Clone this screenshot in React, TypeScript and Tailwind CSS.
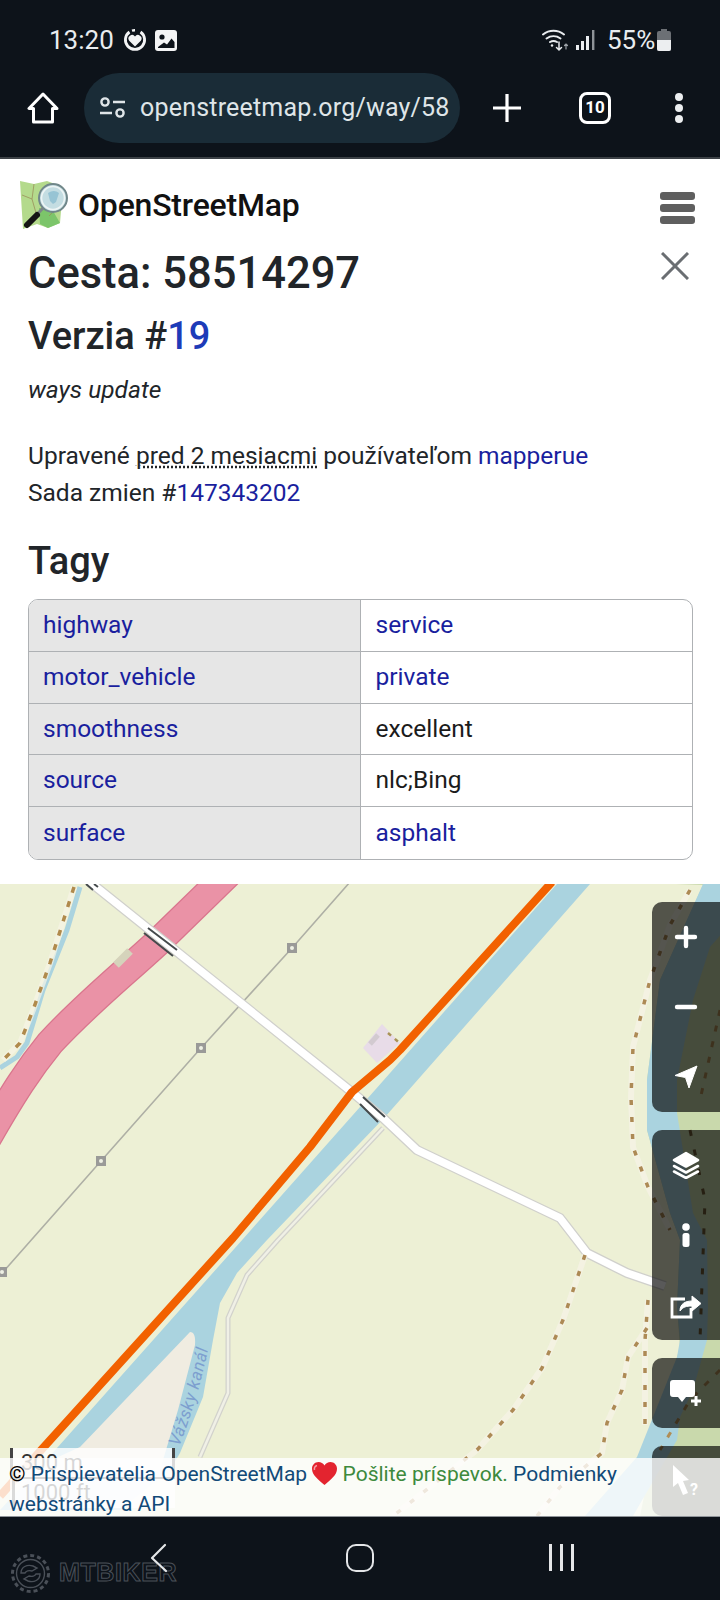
import React from 'react';

const tags = [
  { key: 'highway', value: 'service', linked: true },
  { key: 'motor_vehicle', value: 'private', linked: true },
  { key: 'smoothness', value: 'excellent', linked: false },
  { key: 'source', value: 'nlc;Bing', linked: false },
  { key: 'surface', value: 'asphalt', linked: true },
];

const StatusBar = () => (
  <div className="flex items-center h-[70px] pl-[49px] pt-[10px] text-[#e9ecef] text-[26px]">
    <span className="w-[74px]">13:20</span>
    <svg width="24" height="22" viewBox="0 0 24 22" fill="none">
      <path d="M6.500 3A9.600 9.600 0 1 0 17.500 3" stroke="#f3f4f5" strokeWidth="2.800" />
      <path d="M9 1.600A10 10 0 0 1 12 1.200" stroke="#f3f4f5" strokeWidth="2.400" />
      <path d="M12 17.500l-5.800-5.800a3.500 3.500 0 0 1 5.800-4.200 3.500 3.500 0 0 1 5.800 4.200z" fill="#f3f4f5" />
    </svg>
    <svg className="ml-[8px]" width="22" height="21" viewBox="0 0 22 21">
      <rect x="0" y="0" width="22" height="21" rx="3" fill="#f3f4f5" />
      <circle cx="7" cy="7" r="2.600" fill="#0d131a" />
      <path d="M3 17l6-4.500 3 2 4.500-6 3 3.500V18H3z" fill="#0d131a" />
    </svg>
    <div className="flex-1" />
    <svg width="27" height="24" viewBox="0 0 27 24" fill="none" stroke="#e9ecef" strokeLinecap="round">
      <path d="M1 6.500a17 17 0 0 1 21 0" strokeWidth="2" />
      <path d="M4.500 10.500a12 12 0 0 1 14 0" strokeWidth="2" />
      <path d="M8 14a7 7 0 0 1 7 0" strokeWidth="2" />
      <circle cx="10" cy="17.500" r="1.200" fill="#e9ecef" stroke="none" />
      <path d="M17 14v8m-2.500-2.500L17 22l2.500-2.500" strokeWidth="1.500" />
      <path d="M24 21v-5m-1.500 1.500L24 16l1.500 1.500" strokeWidth="1.200" stroke="#9aa0a6" />
    </svg>
    <svg className="ml-[7px]" width="19" height="20" viewBox="0 0 19 20" fill="#e9ecef">
      <rect x="0" y="15" width="3" height="5" />
      <rect x="5" y="11" width="3" height="9" />
      <rect x="10" y="6" width="3" height="14" />
      <rect x="16" y="0" width="2.400" height="20" fill="#8e9398" />
    </svg>
    <span className="ml-[12px] w-[50px]">55%</span>
    <svg width="14" height="22" viewBox="0 0 14 22">
      <rect x="4" y="0" width="6" height="3" fill="#6c7075" />
      <rect x="0" y="2" width="14" height="20" rx="2" fill="#6c7075" />
      <path d="M0 11h14v9a2 2 0 0 1-2 2H2a2 2 0 0 1-2-2z" fill="#eceef0" />
    </svg>
    <div className="w-[49px]" />
  </div>
);

const Toolbar = () => (
  <div className="flex items-center h-[75px] pl-[27px]">
    <svg width="32" height="32" viewBox="0 0 32 32" fill="none" stroke="#fff" strokeWidth="3" strokeLinejoin="round">
      <path d="M16 2L2 16.500h4.500V30h19V16.500H30z" />
    </svg>
    <div className="ml-[25px] w-[376px] h-[70px] rounded-full bg-[#1a2c37] flex items-center pl-[15px]">
      <svg width="27" height="21" viewBox="0 0 27 21" fill="none" stroke="#dfe5e8" strokeWidth="2.400">
        <circle cx="6" cy="5" r="3.600" />
        <path d="M14 5h12M1 16h12" />
        <circle cx="21" cy="16" r="3.600" />
      </svg>
      <span className="ml-[14px] text-[25px] text-[#dfe5e8] whitespace-nowrap tracking-[0.2px]">openstreetmap.org/way/58</span>
    </div>
    <svg className="ml-[32px]" width="30" height="30" viewBox="0 0 30 30" stroke="#fff" strokeWidth="3.200">
      <path d="M15 1v28M1 15h28" />
    </svg>
    <div className="ml-[57px] w-[32px] h-[32px] rounded-[8px] border-[3px] border-white flex items-center justify-center text-white text-[17px] font-bold leading-none">10</div>
    <div className="ml-[64px] flex flex-col gap-[3px]">
      <div className="w-[8px] h-[8px] rounded-full bg-[#eceef0]" />
      <div className="w-[8px] h-[8px] rounded-full bg-[#eceef0]" />
      <div className="w-[8px] h-[8px] rounded-full bg-[#eceef0]" />
    </div>
  </div>
);

const OsmLogo = () => (
  <svg width="50" height="52" viewBox="0 0 50 52">
    <path d="M1 3l14 3 13-3 16 6-3 36-12 5-11-4-14 5z" fill="#b4da8c" />
    <path d="M20 30l14 3 7 12-12 5-8-4z" fill="#7cc56a" />
    <path d="M3 17l10 4 4 14M15 6l-2 15M30 38l10-10" stroke="#9a8f5a" strokeWidth="0.800" fill="none" />
    <circle cx="34" cy="20" r="14" fill="#c4dde2" stroke="#71878a" strokeWidth="2" />
    <circle cx="34" cy="20" r="11.500" fill="none" stroke="#eef5f5" strokeWidth="1.600" />
    <path d="M29 15q6-4 11 0l-3 9-3 2-3-3z" fill="#97c4d4" />
    <path d="M24 30L11 44" stroke="#7c8587" strokeWidth="3" />
    <path d="M18 37L8 47" stroke="#151515" strokeWidth="6" strokeLinecap="round" />
  </svg>
);

const Detail = () => (
  <section className="bg-white h-[725px] font-['Roboto',sans-serif] text-[#212529]">
    <div className="h-[87px] flex justify-between pl-[19px] pr-[25px] pt-[19px]">
      <div className="flex items-start">
        <OsmLogo />
        <span className="ml-[9px] mt-[5px] text-[32px] leading-[44px] font-medium text-[#111] tracking-[-0.2px]">OpenStreetMap</span>
      </div>
      <div className="pt-[14px] flex flex-col gap-[4px]">
        <div className="w-[35px] h-[8px] rounded-[3px] bg-[#5f5f5f]" />
        <div className="w-[35px] h-[8px] rounded-[3px] bg-[#5f5f5f]" />
        <div className="w-[35px] h-[8px] rounded-[3px] bg-[#5f5f5f]" />
      </div>
    </div>
    <div className="px-[28px]">
      <div className="flex justify-between items-start pr-[3px]">
        <h1 className="text-[43.500px] leading-[55px] font-medium">Cesta: 58514297</h1>
        <svg className="mt-[6px]" width="28" height="28" viewBox="0 0 28 28" stroke="#6a6e72" strokeWidth="3">
          <path d="M1 1l26 26M27 1L1 27" />
        </svg>
      </div>
      <h2 className="mt-[13px] text-[38px] leading-[44px] font-medium">
        Verzia #<span className="text-[#1d3bb8]">19</span>
      </h2>
      <p className="mt-[14px] text-[24.500px] leading-[36px] italic">ways update</p>
      <p className="mt-[29px] text-[24.500px] leading-[37px]">
        Upravené <span className="underline decoration-dotted underline-offset-2">pred 2 mesiacmi</span> používateľom <a className="text-[#1a1f9e]">mapperue</a>
        <br />
        Sada zmien #<a className="text-[#1a1f9e]">147343202</a>
      </p>
      <h2 className="mt-[25px] text-[38px] leading-[50px] font-medium">Tagy</h2>
      <div className="mt-[13px] mr-[-1px] h-[261px] border border-[#aeb1b4] rounded-[10px] overflow-hidden grid grid-rows-5 text-[24.500px]">
        {tags.map((tag, idx) => (
          <div key={tag.key} className={`grid grid-cols-2 ${idx < tags.length - 1 ? 'border-b border-[#aeb1b4]' : ''}`}>
            <div className="bg-[#e6e6e6] border-r border-[#aeb1b4] pl-[14px] flex items-center text-[#1a1f9e]">{tag.key}</div>
            <div className={`pl-[15px] flex items-center ${tag.linked ? 'text-[#1a1f9e]' : 'text-[#1b1b1b]'}`}>{tag.value}</div>
          </div>
        ))}
      </div>
    </div>
  </section>
);

const roadPath = 'M90 882L353 1093 383 1118 417 1150 560 1218 577 1240 587 1253 627 1273 665 1286';
const pinkPath = 'M232 870L157 943C120 977 85 1005 50 1043 32 1065 14 1090-25 1160';
const trails = [
  'M690 890L670 925 650 980 633 1047 631 1097 633 1147 648 1187 670 1230',
  'M585 1255L563 1320 542 1368 513 1410 477 1450 393 1516',
  'M647 1328L628 1357 622 1390 607 1423 602 1453 560 1487 537 1516',
  'M648 1300L645 1340 645 1425',
];

// whole map drawing, coordinates are page coordinates
const MapDrawing = () => (
  <svg className="absolute inset-0" width="720" height="632" viewBox="0 884 720 632" fill="none" strokeLinejoin="round">
    <rect x="0" y="884" width="720" height="632" fill="#edf0d5" />

    {/* river and forest on the right */}
    <path d="M676 884H720V1516H640L660 1417 680 1347 677 1307 680 1240 670 1213 647 1130 647 1080 660 980 703 885z" fill="#c9d9ac" />
    <path d="M703 884H725V930L710 947 693 1000 677 1080 677 1113 693 1213 707 1240 708 1307 707 1340 693 1390 680 1417 677 1440 633 1516H585L637 1457 653 1417 677 1357 680 1340 677 1307 680 1240 670 1213 647 1130 647 1080 660 980z" fill="#aad3df" />

    {/* canal */}
    <path d="M557 884H590L385 1117 360 1143 267 1240 237 1273 220 1303 213 1340 203 1397 180 1453 170 1470 120 1510H0L57 1448 243 1239 360 1107z" fill="#aad3df" />
    <path d="M190 1332Q196 1332 195 1345L178 1410 160 1470H30L80 1447z" fill="#f0ece1" />

    {/* track beside the canal */}
    <path d="M383 1128L278 1240 247 1275 228 1318 228 1393 200 1457" stroke="#d2d2cc" strokeWidth="5" />
    <path d="M383 1128L278 1240 247 1275 228 1318 228 1393 200 1457" stroke="#f0f0e6" strokeWidth="2.500" />

    {/* stream + path top left */}
    <path d="M80 887L67 930 43 990 27 1043 17 1057 0 1068" stroke="#aad3df" strokeWidth="5" />
    <path d="M74 887L50 963 33 1010 20 1043 3 1060" stroke="#f6f4e6" strokeWidth="6" strokeOpacity="0.7" />
    <path d="M74 887L50 963 33 1010 20 1043 3 1060" stroke="#b08a4c" strokeWidth="3.500" strokeDasharray="6 9" />

    {/* trunk road */}
    <path d={pinkPath} stroke="#d9758d" strokeWidth="29" />
    <path d={pinkPath} stroke="#ea92a6" strokeWidth="26.500" />
    <path d="M116 965L130 951" stroke="#d5d3bb" strokeWidth="8" />

    {/* power line */}
    <path d="M350 882L292 948 201 1048 101 1161 3 1272" stroke="#aeafa5" strokeWidth="1.600" />
    <g fill="#9a9a98">
      <rect x="287" y="943" width="10" height="10" />
      <rect x="196" y="1043" width="10" height="10" />
      <rect x="96" y="1156" width="10" height="10" />
      <rect x="-3" y="1267" width="10" height="10" />
    </g>
    <g fill="#eef0e4">
      <circle cx="292" cy="948" r="2" />
      <circle cx="201" cy="1048" r="2" />
      <circle cx="101" cy="1161" r="2" />
      <circle cx="2" cy="1272" r="2" />
    </g>

    {/* small plot */}
    <path d="M382 1024L400 1043 377 1063 363 1048z" fill="#e8dce8" />
    <path d="M370 1044L378 1035" stroke="#d2cad0" strokeWidth="5" />
    <path d="M388 1033L402 1045" stroke="#a99355" strokeWidth="2.500" strokeDasharray="4 5" />

    {/* white service road */}
    <path d={roadPath} stroke="#d0d0cc" strokeWidth="10" />
    <path d={roadPath} stroke="#fff" strokeWidth="7.500" />
    <g stroke="#454a4c" strokeWidth="2">
      <path d="M148 928L177 950M144 933L173 956" />
      <path d="M363 1097L385 1117M360 1104L378 1122" />
      <path d="M86 884L93 890M94 884L98 887" />
    </g>

    {/* the way itself */}
    <path d="M552 882L400 1050 390 1060 352 1092 310 1147 233 1238 43 1448 0 1496" stroke="#f26100" strokeWidth="8" />

    {/* footpaths */}
    <g>
      {trails.map((d) => (
        <path key={d} d={d} stroke="#f5f3e5" strokeWidth="6" strokeOpacity="0.8" />
      ))}
      {trails.map((d) => (
        <path key={d} d={d} stroke="#ad8a55" strokeWidth="3.500" strokeDasharray="5 12" />
      ))}
      <path d="M690 1130L705 1200 700 1340" stroke="#6d5a34" strokeWidth="3" strokeDasharray="6 14" />
      <path d="M720 1010L700 1100" stroke="#b08d55" strokeWidth="3" strokeDasharray="6 10" />
      <path d="M720 1370L690 1400 660 1450" stroke="#b08d55" strokeWidth="3" strokeDasharray="6 10" />
    </g>

    <path id="kanal" d="M179 1447Q196 1405 208 1350" />
    <text fontFamily="Roboto, sans-serif" fontStyle="italic" fontSize="17" fill="#7d9fcf" letterSpacing="0.6">
      <textPath href="#kanal">Vážsky kanál</textPath>
    </text>
  </svg>
);

const Btn = ({ children }: { children: React.ReactNode }) => (
  <div className="h-[70px] flex items-center justify-center">{children}</div>
);

const MapControls = () => (
  <div className="absolute right-0 top-[18px] w-[68px] flex flex-col gap-[18px]">
    <div className="bg-black/65 rounded-l-[10px]">
      <Btn>
        <svg width="24" height="24" viewBox="0 0 24 24" stroke="#fff" strokeWidth="4.400" strokeLinecap="round">
          <path d="M12 3v18M3 12h18" />
        </svg>
      </Btn>
      <Btn>
        <svg width="24" height="24" viewBox="0 0 24 24" stroke="#fff" strokeWidth="4.400" strokeLinecap="round">
          <path d="M3 12h18" />
        </svg>
      </Btn>
      <Btn>
        <svg width="24" height="24" viewBox="0 0 24 24" fill="#fff">
          <path d="M23 1L1 10.500l10.500 2 3.500 10.500z" stroke="#fff" strokeWidth="1" strokeLinejoin="round" />
        </svg>
      </Btn>
    </div>
    <div className="bg-black/65 rounded-l-[10px]">
      <Btn>
        <svg width="28" height="28" viewBox="0 0 28 28" fill="none" stroke="#fff" strokeWidth="2.600" strokeLinecap="round" strokeLinejoin="round">
          <path d="M14 2L26 9 14 15.500 2 9z" fill="#fff" />
          <path d="M2 15l12 6.500L26 15M2 20.500L14 27l12-6.500" />
        </svg>
      </Btn>
      <Btn>
        <svg width="10" height="24" viewBox="0 0 10 24" fill="#fff">
          <circle cx="5" cy="4" r="3.800" />
          <rect x="1.500" y="10" width="7" height="14" rx="2.500" />
        </svg>
      </Btn>
      <Btn>
        <svg width="32" height="27" viewBox="0 0 32 27" fill="none" stroke="#fff" strokeWidth="2.800">
          <path d="M15 7H2v18h19v-9" />
          <path d="M10 19c0-7 5-10 12-10V4l9 7.500L22 19v-5c-6 0-9 1-12 5z" fill="#fff" strokeWidth="1" strokeLinejoin="round" />
        </svg>
      </Btn>
    </div>
    <div className="bg-black/65 rounded-l-[10px]">
      <Btn>
        <svg width="32" height="28" viewBox="0 0 32 28" fill="#fff">
          <path d="M3 1h19a3 3 0 0 1 3 3v11a3 3 0 0 1-3 3h-6l-4 5-4-5H3a3 3 0 0 1-3-3V4a3 3 0 0 1 3-3z" />
          <path d="M26 17v10M21 22h10" stroke="#fff" strokeWidth="3" />
        </svg>
      </Btn>
    </div>
    <div className="bg-black/65 rounded-l-[10px]">
      <Btn>
        <svg width="30" height="32" viewBox="0 0 30 32" fill="#fff">
          <path d="M2 0l16 15-6 1 5 12-5 2-5-12-5 4z" />
          <text x="19" y="30" fontSize="16" fontWeight="700" fontFamily="Roboto, sans-serif">?</text>
        </svg>
      </Btn>
    </div>
  </div>
);

const ScaleControl = () => (
  <div className="absolute left-[10px] top-[564px] w-[165px] h-[60px] bg-white/80 text-[22px] leading-[30px] font-['Roboto',sans-serif] text-[#333] pl-[11px]">
    <div className="absolute left-0 top-0 w-[3px] h-[30px] bg-[#444]" />
    <div className="absolute right-0 top-0 w-[3px] h-[30px] bg-[#444]" />
    <div className="absolute left-0 right-0 top-[29px] h-[2px] bg-[#444]" />
    <div className="absolute left-[2px] top-[30px] w-[3px] h-[30px] bg-[#444]" />
    <div>300 m</div>
    <div>1000 ft</div>
  </div>
);

const Attribution = () => (
  <div className="absolute left-0 right-0 bottom-0 h-[58px] bg-white/80 px-[9px] pt-[1px] text-[21px] leading-[30px] font-['Roboto',sans-serif] text-[#124a78]">
    <span className="text-black">©</span> Prispievatelia OpenStreetMap{' '}
    <svg className="inline align-[-4px]" width="25" height="23" viewBox="0 0 25 23">
      <path d="M12.500 23C6 17.500 0 13 0 6.800 0 2.800 3 0 6.500 0c2.500 0 4.800 1.300 6 3.600C13.700 1.300 16 0 18.500 0 22 0 25 2.800 25 6.800 25 13 19 17.500 12.500 23z" fill="#e3242f" />
      <path d="M5 3.500c-2 .5-3 2.500-2.500 4.500" stroke="#f8a0a5" strokeWidth="1.500" fill="none" />
    </svg>{' '}
    <span className="text-[#3d8a3d]">Pošlite príspevok.</span> Podmienky webstránky a API
  </div>
);

const MapPanel = () => (
  <div className="relative h-[632px] overflow-hidden">
    <MapDrawing />
    <ScaleControl />
    <MapControls />
    <Attribution />
  </div>
);

const NavBar = () => (
  <div className="relative h-[84px] bg-[#0d131a] border-t border-[#8f9499] flex items-center font-['Roboto',sans-serif]">
    <svg className="absolute left-[9px] top-[36px]" width="43" height="41" viewBox="0 0 43 41" fill="none" stroke="#4a5058" strokeWidth="1.400">
      <circle cx="21.500" cy="20.500" r="18" strokeDasharray="4 3" strokeWidth="3" />
      <circle cx="21.500" cy="20.500" r="14" />
      <path d="M12 20c0-6 6-9 12-7l4 2-5 3c-3-1-6 0-7 2zM31 21c0 6-6 9-12 7l-4-2 5-3c3 1 6 0 7-2z" />
    </svg>
    <span className="absolute left-[59px] top-[42px] text-[25px] leading-[26px] font-bold text-transparent tracking-[0.6px] font-['Liberation_Sans',sans-serif] [-webkit-text-stroke:1px_#4a5058]">MTBIKER</span>
    <svg className="absolute left-[150px] top-[26px]" width="18" height="30" viewBox="0 0 18 30" fill="none" stroke="#e4e6e8" strokeWidth="2.200" strokeLinecap="round" strokeLinejoin="round">
      <path d="M15 2L2 15l14 13" />
    </svg>
    <div className="absolute left-[346px] top-[27px] w-[28px] h-[28px] rounded-[10px] border-[2.5px] border-[#e4e6e8]" />
    <div className="absolute left-[549px] top-[27px] flex gap-[8px]">
      <div className="w-[3px] h-[27px] bg-[#e4e6e8]" />
      <div className="w-[3px] h-[27px] bg-[#e4e6e8]" />
      <div className="w-[3px] h-[27px] bg-[#e4e6e8]" />
    </div>
  </div>
);

export default function App() {
  return (
    <div className="w-[720px] h-[1600px] overflow-hidden bg-[#0d131a] font-['Roboto',sans-serif]">
      <header className="h-[159px] bg-[#0d131a] border-b-2 border-[#3c4146]">
        <StatusBar />
        <Toolbar />
      </header>
      <Detail />
      <MapPanel />
      <NavBar />
    </div>
  );
}
